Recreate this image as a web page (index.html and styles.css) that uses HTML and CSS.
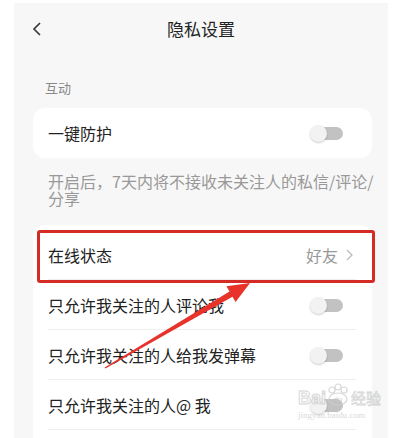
FILE: index.html
```html
<!DOCTYPE html>
<html>
<head>
	<meta charset="utf-8">
	<meta name="viewport" content="width=device-width, initial-scale=1">
	<title>隐私设置</title>
	<link rel="stylesheet" href="styles.css">
</head>
<body>
	<div class="screen">
		<div class="header">
			<svg class="back" width="10" height="14" viewBox="0 0 10 14"><polyline points="8,1 2,7 8,13" fill="none" stroke="#333" stroke-width="1.6"/></svg>
			<div class="title">隐私设置</div>
		</div>

		<div class="label">互动</div>

		<div class="card">
			<div class="row">
				<span class="name">一键防护</span>
				<span class="toggle"><i></i></span>
			</div>
		</div>

		<p class="desc">开启后，7天内将不接收未关注人的私信/评论/分享</p>

		<div class="card list">
			<div class="row line">
				<span class="name">在线状态</span>
				<span class="value">好友
					<svg width="7" height="12" viewBox="0 0 7 12"><polyline points="1,1 6,6 1,11" fill="none" stroke="#bbb" stroke-width="1.3"/></svg>
				</span>
			</div>
			<div class="row line">
				<span class="name">只允许我关注的人评论我</span>
				<span class="toggle"><i></i></span>
			</div>
			<div class="row line">
				<span class="name">只允许我关注的人给我发弹幕</span>
				<span class="toggle"><i></i></span>
			</div>
			<div class="row line">
				<span class="name">只允许我关注的人@ 我</span>
				<span class="toggle"><i></i></span>
			</div>
		</div>

		<div class="mark"></div>
	</div>

	<!-- annotation arrow drawn over the screenshot -->
	<svg class="arrow" width="414" height="438" viewBox="0 0 414 438">
		<polygon points="104.6,367.4 229.5,291.5 226.4,286.3 250,283 235.6,301.9 232.5,296.7 105.4,368.6" fill="#e8332b"/>
	</svg>

	<div class="watermark">
		<div class="wm-top">
			<span class="wm-bai">Bai</span>
			<svg width="24" height="24" viewBox="0 0 24 24">
				<g fill="none" stroke="#cfcfcf" stroke-width="1.2">
					<circle cx="6" cy="7" r="3"/>
					<circle cx="12" cy="4" r="3"/>
					<circle cx="18" cy="7" r="3"/>
					<ellipse cx="12" cy="16" rx="9" ry="6"/>
				</g>
				<text x="12" y="19" font-size="8" text-anchor="middle" fill="#c8c8c8" font-family="Liberation Sans">du</text>
			</svg>
			<span class="wm-jy">经验</span>
		</div>
		<div class="wm-url">jingyan.baidu.com</div>
	</div>
</body>
</html>
```

FILE: styles.css
```css
* {
	box-sizing: border-box;
}

body {
	margin: 0;
	background: #fff;
	font-family: "Noto Sans CJK SC", "Noto Sans", sans-serif;
	position: relative;
	height: 438px;
	overflow: hidden;
}

.screen {
	margin: 3px 0 0 14px;
	width: 374px;
	height: 435px;
	background: #f7f7f7;
	position: relative;
	overflow: hidden;
}

.header {
	height: 50px;
	display: flex;
	align-items: center;
	justify-content: center;
	position: relative;
}

.back {
	position: absolute;
	left: 18px;
	top: 19px;
}

.title {
	font-size: 17px;
	color: #222;
}

.label {
	padding: 25px 0 0 31px;
	height: 45px;
	font-size: 13px;
	line-height: 20px;
	color: #888;
}

.card {
	margin: 10px 16px 0 19px;
	background: #fff;
	border-radius: 12px;
}

.row {
	height: 50px;
	display: flex;
	align-items: center;
	justify-content: space-between;
	padding: 0 16px 0 15px;
	font-size: 16px;
	color: #222;
}

.line {
	position: relative;
}

.line::after {
	content: "";
	position: absolute;
	left: 15px;
	right: 16px;
	bottom: 0;
	border-bottom: 1px solid #eee;
}

.toggle {
	width: 31px;
	height: 13px;
	margin-right: 13px;
	background: #c2c2c2;
	border-radius: 7px;
	position: relative;
}

.toggle i {
	position: absolute;
	left: -2px;
	top: -2px;
	width: 17px;
	height: 17px;
	border-radius: 50%;
	background: #f2f2f2;
	box-shadow: 0 1px 2px rgba(0,0,0,0.2);
}

.value {
	display: flex;
	align-items: center;
	gap: 8px;
	color: #999;
	margin-right: 3px;
}

.desc {
	margin: 15px 5px 0 34px;
	font-size: 16px;
	line-height: 17px;
	color: #999;
}

.list {
	margin-top: 18px;
	padding-top: 5px;
	height: 300px;
}

/* red annotation frame */
.mark {
	position: absolute;
	left: 23px;
	top: 227px;
	width: 338px;
	height: 53px;
	border: 3px solid #d52b25;
	border-radius: 3px;
}

.arrow {
	position: absolute;
	left: 0;
	top: 0;
}

.watermark {
	position: absolute;
	left: 298px;
	top: 383px;
	opacity: 0.8;
}

.wm-top {
	display: flex;
	align-items: flex-end;
}

.wm-bai {
	font-family: "Liberation Sans", sans-serif;
	font-size: 18px;
	font-weight: bold;
	color: transparent;
	-webkit-text-stroke: 1px #cfcfcf;
	line-height: 18px;
}

.wm-jy {
	font-size: 15px;
	color: transparent;
	-webkit-text-stroke: 0.8px #cfcfcf;
	line-height: 18px;
	margin-left: 1px;
}

.wm-url {
	font-family: "Liberation Serif", serif;
	font-size: 9px;
	color: #d0d0d0;
	margin-top: 3px;
}
```
